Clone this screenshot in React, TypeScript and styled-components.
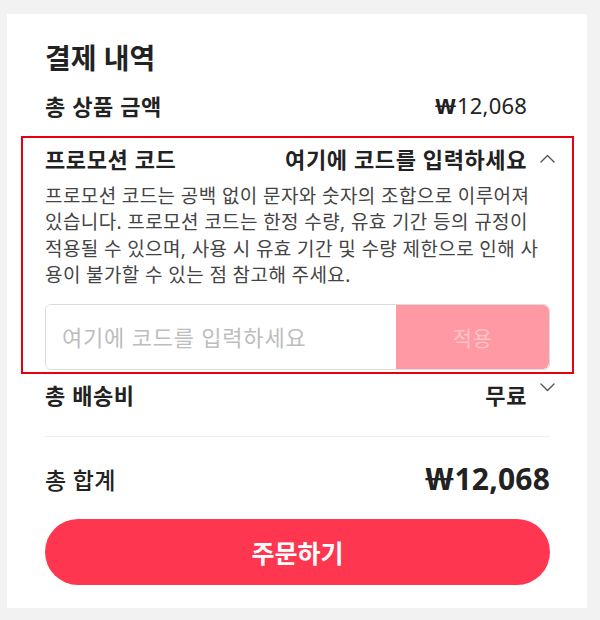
import React from "react";
import styled, { createGlobalStyle } from "styled-components";

const GlobalStyle = createGlobalStyle`
  html, body {
    margin: 0;
    padding: 0;
    background: #f2f2f2;
  }
  body {
    font-family: "Noto Sans", "Noto Sans CJK KR", sans-serif;
    color: #222;
  }
  * { box-sizing: border-box; }
`;

const Page = styled.div`
  padding: 14px 13px 13px 7px;
`;

const Card = styled.section`
  background: #ffffff;
  padding: 26px 37px 23px 38px;
  display: flex;
  flex-direction: column;
`;

const Title = styled.h2`
  margin: 0;
  font-size: 28px;
  line-height: 36px;
  font-weight: 700;
  color: #222;
`;

const Row = styled.div<{ $mt?: number }>`
  display: flex;
  align-items: center;
  justify-content: space-between;
  height: 30px;
  margin-top: ${(p) => p.$mt ?? 0}px;
`;

const Label = styled.span<{ $weight?: number }>`
  font-size: 22px;
  letter-spacing: 0.6px;
  font-weight: ${(p) => p.$weight ?? 700};
  color: #222;
  white-space: nowrap;
`;

const Trailing = styled.div`
  display: flex;
  align-items: center;
`;

const Value = styled.span<{ $weight?: number }>`
  font-size: 22px;
  letter-spacing: ${(p) => ((p.$weight ?? 400) >= 700 ? "0.6px" : "0.2px")};
  font-weight: ${(p) => p.$weight ?? 400};
  color: #222;
  white-space: nowrap;
`;

const Won = styled.span`
  display: inline-block;
  font-family: "Noto Sans", sans-serif;
  font-weight: 700;
  letter-spacing: 0;
  transform: scaleX(1.3);
  transform-origin: left center;
  margin-right: 0.24em;
`;

const IconSlot = styled.span<{ $top?: boolean }>`
  width: 28px;
  margin-right: -5px;
  display: flex;
  justify-content: flex-end;
  align-self: ${(p) => (p.$top ? "flex-start" : "center")};
  margin-top: ${(p) => (p.$top ? "5px" : "0")};
  color: #555;
`;

const Promo = styled.div`
  margin: 16px -24px 0 -24px;
  padding: 5px 22px 2px 22px;
  border: 2px solid #e60012;
`;

const Description = styled.p`
  margin: 10px 0 0 0;
  padding-right: 10px;
  font-size: 19px;
  letter-spacing: 0.4px;
  line-height: 26.4px;
  color: #444;
  font-weight: 400;
`;

const CodeForm = styled.div`
  display: flex;
  height: 66px;
  margin-top: 15px;
  border: 1px solid #dcdcdc;
  border-radius: 6px;
  overflow: hidden;
`;

const CodeInput = styled.input`
  flex: 1;
  min-width: 0;
  border: none;
  outline: none;
  padding: 0 16px;
  font-family: "Noto Sans", "Noto Sans CJK KR", sans-serif;
  font-size: 22px;
  letter-spacing: 0.8px;
  color: #222;
  background: #fff;
  &::placeholder {
    color: #bdbdbd;
  }
`;

const ApplyButton = styled.button`
  width: 153px;
  border: none;
  background: #ff9aa5;
  color: #ffc3ca;
  font-family: "Noto Sans", "Noto Sans CJK KR", sans-serif;
  font-size: 21px;
  letter-spacing: 0.4px;
  font-weight: 400;
  border-radius: 0 6px 6px 0;
`;

const Divider = styled.hr`
  margin: 27px 0 0 0;
  border: none;
  height: 1px;
  background: #f1f1f1;
`;

const TotalRow = styled.div`
  display: flex;
  align-items: center;
  justify-content: space-between;
  height: 40px;
  margin-top: 22px;
`;

const TotalLabel = styled.span`
  font-size: 23px;
  letter-spacing: 0.3px;
  font-weight: 500;
  color: #222;
`;

const TotalValue = styled.span`
  font-size: 30px;
  font-weight: 700;
  color: #222;
  letter-spacing: 0.2px;
`;

const OrderButton = styled.button`
  margin-top: 20px;
  height: 66px;
  border: none;
  border-radius: 33px;
  background: #ff364f;
  color: #fff;
  font-family: "Noto Sans", "Noto Sans CJK KR", sans-serif;
  font-size: 25px;
  font-weight: 700;
`;

const Chevron = ({ up }: { up?: boolean }) => (
  <svg width="15" height="9" viewBox="0 0 15 9" fill="none">
    <polyline
      points={up ? "1,8 7.5,1.5 14,8" : "1,1 7.5,7.5 14,1"}
      stroke="currentColor"
      strokeWidth="1.4"
      strokeLinecap="round"
      strokeLinejoin="round"
    />
  </svg>
);

export default function App() {
  return (
    <>
      <GlobalStyle />
      <Page>
        <Card>
          <Title>결제 내역</Title>
          <Row $mt={14}>
            <Label $weight={600}>총 상품 금액</Label>
            <Trailing>
              <Value>
                <Won>₩</Won>12,068
              </Value>
              <IconSlot />
            </Trailing>
          </Row>
          <Promo>
            <Row>
              <Label>프로모션 코드</Label>
              <Trailing>
                <Value $weight={700}>여기에 코드를 입력하세요</Value>
                <IconSlot>
                  <Chevron up />
                </IconSlot>
              </Trailing>
            </Row>
            <Description>
              프로모션 코드는 공백 없이 문자와 숫자의 조합으로 이루어져
              있습니다. 프로모션 코드는 한정 수량, 유효 기간 등의 규정이
              적용될 수 있으며, 사용 시 유효 기간 및 수량 제한으로 인해
              사용이 불가할 수 있는 점 참고해 주세요.
            </Description>
            <CodeForm>
              <CodeInput placeholder="여기에 코드를 입력하세요" />
              <ApplyButton type="button">적용</ApplyButton>
            </CodeForm>
          </Promo>
          <Row $mt={5}>
            <Label>총 배송비</Label>
            <Trailing>
              <Value $weight={700}>무료</Value>
              <IconSlot $top>
                <Chevron />
              </IconSlot>
            </Trailing>
          </Row>
          <Divider />
          <TotalRow>
            <TotalLabel>총 합계</TotalLabel>
            <TotalValue>
              <Won>₩</Won>12,068
            </TotalValue>
          </TotalRow>
          <OrderButton type="button">주문하기</OrderButton>
        </Card>
      </Page>
    </>
  );
}
